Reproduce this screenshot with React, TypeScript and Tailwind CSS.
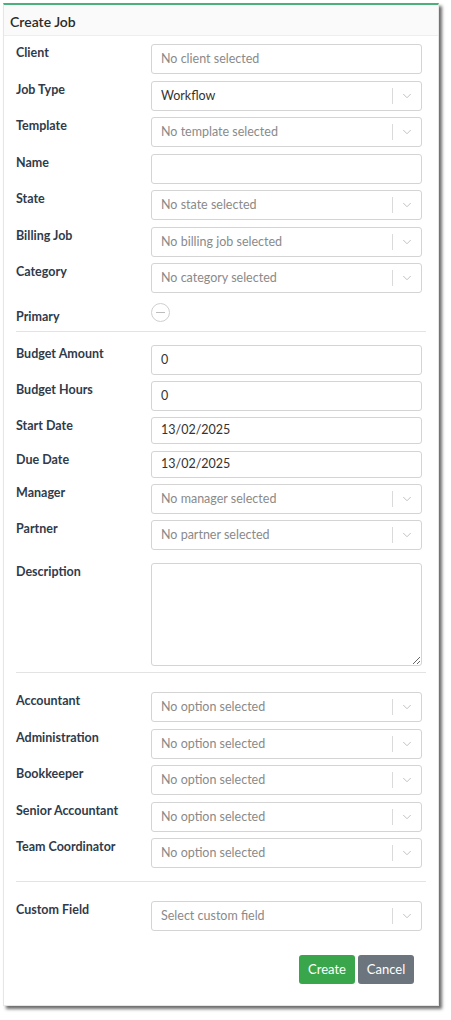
import { ChevronDown } from 'lucide-react'

const font = { fontFamily: 'Lato, "Open Sans", sans-serif' }

function Label({ children, className = '' }: { children: React.ReactNode; className?: string }) {
  return (
    <div className={`w-[135px] shrink-0 pt-[1px] text-[12.5px] leading-4 font-bold text-[#2f3b4b] ${className}`}>
      {children}
    </div>
  )
}

function TextBox({ value = '', placeholder = '', h = 'h-[30px]' }: { value?: string; placeholder?: string; h?: string }) {
  return (
    <div
      className={`flex ${h} w-[271px] items-center rounded-[3px] border border-[#d4d4d4] bg-white px-[9px] text-[12.5px] ${
        value ? 'text-[#333]' : 'text-[#8a8a8a]'
      }`}
    >
      {value || placeholder}
    </div>
  )
}

function Select({ value = '', placeholder = '' }: { value?: string; placeholder?: string }) {
  return (
    <div className="flex h-[30px] w-[271px] items-center rounded-[3px] border border-[#d4d4d4] bg-white text-[12.5px]">
      <span className={`flex-1 px-[9px] pt-[1px] ${value ? 'text-[#333]' : 'text-[#8a8a8a]'}`}>{value || placeholder}</span>
      <span className="h-[16px] w-px bg-[#dadada]" />
      <span className="flex w-[28px] justify-center">
        <ChevronDown className="size-[14px] text-[#bdbdbd]" strokeWidth={1.6} />
      </span>
    </div>
  )
}

function Row({ label, children, className = '' }: { label: string; children: React.ReactNode; className?: string }) {
  return (
    <div className={`flex ${className}`}>
      <Label>{label}</Label>
      {children}
    </div>
  )
}

function Divider({ className = '' }: { className?: string }) {
  return <div className={`mr-[-4px] h-px bg-[#e3e3e3] ${className}`} />
}

export default function App() {
  return (
    <div className="min-h-[1020px] bg-white pl-[3px] pt-[3px]" style={font}>
      <div className="w-[436px] border-t-2 border-[#4cb07c] border-x border-b border-x-[#e6e6e6] border-b-[#e6e6e6] bg-white shadow-[3px_3px_3px_rgba(60,60,60,0.75)]">
        <div className="flex h-[31px] items-center border-b border-[#eeeeee] bg-[#fafafa] px-[6px] pt-[2px] text-[14px] font-semibold text-[#2b2b2b]">
          Create Job
        </div>

        <div className="pl-[12px] pr-[16px] pt-[8px] pb-[21px]">
          <div className="flex flex-col gap-[6.5px]">
            <Row label="Client">
              <TextBox placeholder="No client selected" />
            </Row>
            <Row label="Job Type">
              <Select value="Workflow" />
            </Row>
            <Row label="Template">
              <Select placeholder="No template selected" />
            </Row>
            <Row label="Name">
              <TextBox />
            </Row>
            <Row label="State">
              <Select placeholder="No state selected" />
            </Row>
            <Row label="Billing Job">
              <Select placeholder="No billing job selected" />
            </Row>
            <Row label="Category">
              <Select placeholder="No category selected" />
            </Row>
          </div>

          <div className="mt-[7px] flex h-[24px]">
            <Label className="mt-[8px]">Primary</Label>
            <div className="mt-[3px] flex size-[19px] items-center justify-center rounded-full border border-[#cfcfcf]">
              <span className="h-px w-[9px] bg-[#bdbdbd]" />
            </div>
          </div>

          <Divider className="mt-[7px]" />

          <div className="mt-[13px] flex flex-col gap-[6px]">
            <Row label="Budget Amount">
              <TextBox value="0" />
            </Row>
            <Row label="Budget Hours">
              <TextBox value="0" />
            </Row>
            <Row label="Start Date">
              <TextBox value="13/02/2025" h="h-[27px]" />
            </Row>
            <Row label="Due Date" className="mt-px">
              <TextBox value="13/02/2025" h="h-[27px]" />
            </Row>
            <Row label="Manager">
              <Select placeholder="No manager selected" />
            </Row>
            <Row label="Partner">
              <Select placeholder="No partner selected" />
            </Row>
            <Row label="Description" className="mt-[7px]">
              <textarea className="h-[103px] w-[271px] rounded-[3px] border border-[#d4d4d4] bg-white outline-none" />
            </Row>
          </div>

          <Divider className="mt-[6px]" />

          <div className="mt-[19px] flex flex-col gap-[6.5px]">
            <Row label="Accountant">
              <Select placeholder="No option selected" />
            </Row>
            <Row label="Administration">
              <Select placeholder="No option selected" />
            </Row>
            <Row label="Bookkeeper">
              <Select placeholder="No option selected" />
            </Row>
            <Row label="Senior Accountant">
              <Select placeholder="No option selected" />
            </Row>
            <Row label="Team Coordinator">
              <Select placeholder="No option selected" />
            </Row>
          </div>

          <Divider className="mt-[13px]" />

          <Row label="Custom Field" className="mt-[19px]">
            <Select placeholder="Select custom field" />
          </Row>

          <div className="mt-[24px] flex justify-end gap-[3px] pr-[8px]">
            <button className="h-[29px] w-[56px] rounded-[3px] bg-[#3aa64b] text-[13px] text-white">Create</button>
            <button className="h-[29px] w-[56px] rounded-[3px] bg-[#6c747d] text-[13px] text-white">Cancel</button>
          </div>
        </div>
      </div>
    </div>
  )
}
